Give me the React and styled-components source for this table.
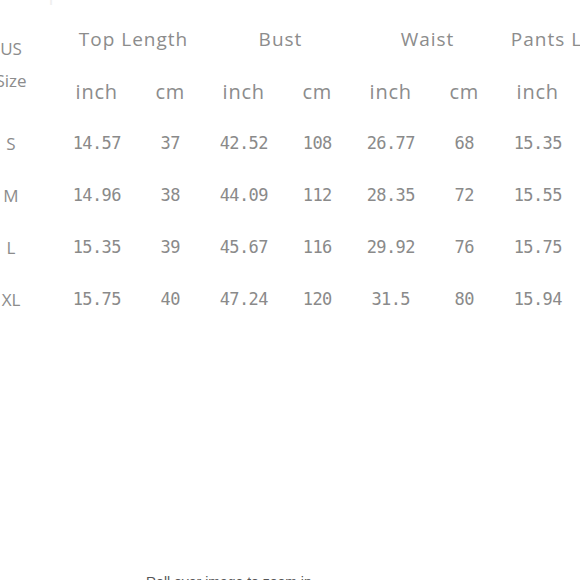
import React from "react";
import styled, { createGlobalStyle } from "styled-components";

const Global = createGlobalStyle`
  html, body { margin: 0; padding: 0; background: #fff; }
  body { width: 580px; height: 580px; overflow: hidden; }
`;

const Page = styled.div`
  width: 580px;
  height: 580px;
  overflow: hidden;
  display: flex;
  flex-direction: column;
  background: #fff;
`;

const Title = styled.div`
  height: 13px;
  flex-shrink: 0;
  display: flex;
  align-items: flex-end;
  justify-content: center;
  overflow: hidden;
  padding-bottom: 10px;
  box-sizing: border-box;
  font-family: "Open Sans", sans-serif;
  font-size: 20px;
  line-height: 20px;
  color: #efefef;
  white-space: nowrap;
  letter-spacing: 1px;
`;

const Chart = styled.div`
  display: grid;
  grid-template-columns: 98px repeat(8, 73.5px);
  grid-auto-rows: 52px;
  margin-left: -38px;
  height: 560px;
  flex-shrink: 0;
  align-content: start;
`;

const SizeHead = styled.div`
  grid-row: span 2;
  display: flex;
  flex-direction: column;
  justify-content: center;
  align-items: center;
  font-family: "Open Sans", sans-serif;
  font-size: 17px;
  line-height: 32px;
  color: #8c8c8c;
`;

const Group = styled.div`
  grid-column: span 2;
  display: flex;
  align-items: center;
  justify-content: center;
  font-family: "Open Sans", sans-serif;
  font-size: 19px;
  letter-spacing: 1px;
  color: #8c8c8c;
  white-space: nowrap;
`;

const Unit = styled.div`
  display: flex;
  align-items: center;
  justify-content: center;
  font-family: "Open Sans", sans-serif;
  font-size: 20px;
  letter-spacing: 0.8px;
  color: #8c8c8c;
  white-space: nowrap;
`;

const SizeCell = styled.div`
  display: flex;
  align-items: center;
  justify-content: center;
  font-family: "Open Sans", sans-serif;
  font-size: 17px;
  color: #8c8c8c;
`;

const Num = styled.div`
  display: flex;
  align-items: center;
  justify-content: center;
  font-family: "DejaVu Sans Mono", monospace;
  font-size: 17px;
  letter-spacing: -0.6px;
  color: #8a8a8a;
  white-space: nowrap;
`;

const Caption = styled.div`
  padding-left: 146px;
  font-family: "Liberation Sans", Arial, sans-serif;
  font-size: 14px;
  line-height: 18px;
  color: #555;
  white-space: nowrap;
`;

const groups = ["Top Length", "Bust", "Waist", "Pants Length"];
const units = ["inch", "cm", "inch", "cm", "inch", "cm", "inch", "cm"];
const rows = [
  ["S", "14.57", "37", "42.52", "108", "26.77", "68", "15.35", "39"],
  ["M", "14.96", "38", "44.09", "112", "28.35", "72", "15.55", "39.5"],
  ["L", "15.35", "39", "45.67", "116", "29.92", "76", "15.75", "40"],
  ["XL", "15.75", "40", "47.24", "120", "31.5", "80", "15.94", "40.5"],
];

export default function App() {
  return (
    <Page>
      <Global />
      <Title>Size Chart — please allow 1-3cm differences due to manual measurement</Title>
      <Chart>
        <SizeHead>
          <span>US</span>
          <span>Size</span>
        </SizeHead>
        {groups.map((g) => (
          <Group key={g}>{g}</Group>
        ))}
        {units.map((u, i) => (
          <Unit key={i}>{u}</Unit>
        ))}
        {rows.map((r) => (
          <React.Fragment key={r[0]}>
            <SizeCell>{r[0]}</SizeCell>
            {r.slice(1).map((v, i) => (
              <Num key={i}>{v}</Num>
            ))}
          </React.Fragment>
        ))}
      </Chart>
      <Caption>Roll over image to zoom in</Caption>
    </Page>
  );
}
